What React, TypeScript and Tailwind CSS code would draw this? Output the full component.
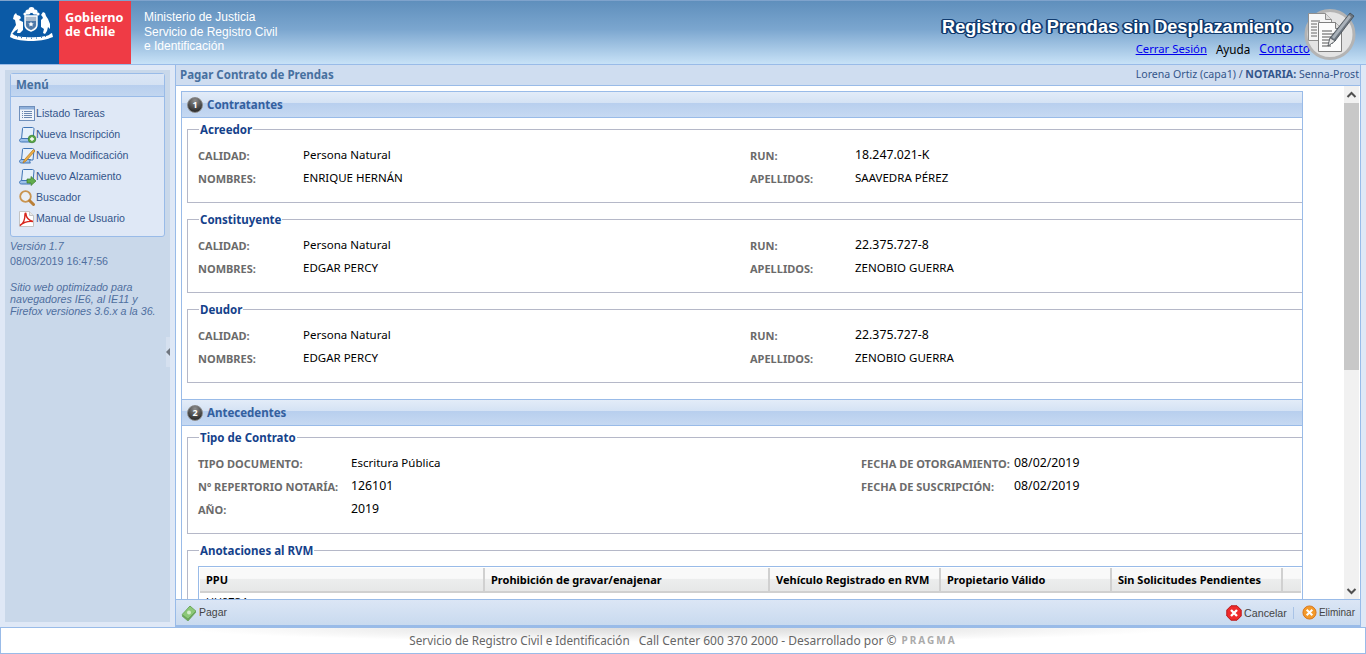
import type { ReactNode } from "react";

const font = "font-['Noto_Sans','DejaVu_Sans',sans-serif]";
const arial = "font-['Liberation_Sans',sans-serif]";

type Field = [string, string];

// escudo, dibujado a mano
const Coat = () => (
  <svg width="46" height="38" viewBox="0 0 46 38">
    <g fill="#fff">
      {/* plumas */}
      <circle cx="20" cy="6" r="2.600" />
      <circle cx="23.500" cy="4" r="3" />
      <circle cx="27" cy="6" r="2.600" />
      <circle cx="17" cy="8" r="1.600" />
      <circle cx="30" cy="8" r="1.600" />
      {/* huemul */}
      <path d="M6 9l2-2 1 2 3 1 1 2-2 2 4 2v8l-3 3h-3l1-4-3 2-3 3-1-1 3-5 2-3-1-5-2-1z" />
      {/* condor */}
      <path d="M33 9l2-3 2 1 1 3 2 3 2 5v5l-2-2-1 4-2 3-2-1 1-4-3-2v-7l2-2-1-2z" />
      {/* cinta */}
      <path d="M3 27c1 0 2 1 3 2 5 3 29 3 35 0 1-1 2-2 3-2l1 4-3 1c-8 4-30 4-38 0l-2-1z" />
    </g>
    <path d="M17 10h12v9c0 3-3 5-6 6-3-1-6-3-6-6z" fill="#a9bacd" stroke="#fff" strokeWidth="1.400" />
    <path d="M18 15h10v4c0 2-3 4-5 5-2-1-5-3-5-5z" fill="#4f79a8" />
    <path d="M23 15.500l.8 1.700 1.900.200-1.400 1.300.400 1.900-1.700-1-1.700 1 .400-1.900-1.400-1.300 1.900-.200z" fill="#fff" />
    <path d="M9 30.500l1 .500M13 31.500l1 .300M18 32h1M23 32.200h1M28 32h1M33 31.400l1-.300M37 30.500l1-.500" stroke="#0b5aa6" />
  </svg>
);

const DocPen = () => (
  <svg width="52" height="52" viewBox="0 0 52 52">
    <circle cx="26" cy="25.500" r="24" fill="#e4e4e4" stroke="#b4b4b4" strokeWidth="3" />
    <path d="M4.500 4.500h17l6 6v21h-23z" fill="#f7f7f7" stroke="#8f8f8f" />
    <path d="M21.500 4.500v6h6" fill="#ddd" stroke="#8f8f8f" />
    <path d="M7 12h9M7 15h6M7 18h6M7 21h6M7 24h6M7 27h6" stroke="#666" />
    <path d="M14.500 13.500h17l6 6v23h-23z" fill="#fcfcfc" stroke="#7f7f7f" />
    <path d="M31.500 13.500v6h6" fill="#ddd" stroke="#7f7f7f" />
    <path d="M18 22h10M18 25h15M18 28h15M18 31h14M18 34h11M18 37h9" stroke="#555" />
    <path d="M46 4l4 3-19 25-7 5 2-8z" fill="#6d7680" stroke="#3a4046" strokeWidth=".700" />
    <path d="M45 6l2 2-17 22-2-2z" fill="#aab2ba" />
    <path d="M24 37l2-8 5 3z" fill="#e8e8e8" stroke="#3a4046" strokeWidth=".500" />
  </svg>
);

const ListIcon = () => (
  <svg width="16" height="15" viewBox="0 0 16 15">
    <rect x=".5" y=".5" width="15" height="14" fill="#f0f5fb" stroke="#6f8fbb" />
    <rect x="1" y="1" width="14" height="2.500" fill="#8fb0da" />
    <path d="M3 5.500h1M5 5.500h8M3 7.500h1M5 7.500h8M3 9.500h1M5 9.500h8M3 11.500h1M5 11.500h8" stroke="#6d89b0" />
  </svg>
);

const Scroll = ({ badge }: { badge: ReactNode }) => (
  <svg width="17" height="16" viewBox="0 0 17 16" className="overflow-visible">
    <path d="M4.500.500h9c1 0 1.500 .7 1.500 1.500l-1 10H2.500l1-10c0-1 0-1.500 1-1.500z" fill="#e6f0fb" stroke="#3f74b5" />
    <path d="M.5 13.500c0-1 1-2 2-2h9c-1 .8-1 3 0 3.500h-9c-1 0-2-.500-2-1.500z" fill="#9cc0ea" stroke="#3f74b5" />
    {badge}
  </svg>
);

const SearchIcon = () => (
  <svg width="16" height="16" viewBox="0 0 16 16" fill="none">
    <circle cx="6.500" cy="6.500" r="5.300" stroke="#c9944f" strokeWidth="1.800" fill="#e9eef5" />
    <path d="M10.700 10.700l3.800 3.800" stroke="#b97f38" strokeWidth="3" strokeLinecap="round" />
  </svg>
);

const PdfIcon = () => (
  <svg width="15" height="16" viewBox="0 0 15 16">
    <path d="M.5.500h10l4 4v11H.5z" fill="#fff" stroke="#c4c4c4" />
    <path d="M10.500.500v4h4" fill="#e8e8e8" stroke="#c4c4c4" />
    <path d="M1 14.500c3-1.500 5-6 5-11.500.2-1 1-1 1 0 0 3 2.500 6.500 7 7.500-4-.500-9 .500-13 4z" fill="none" stroke="#d8261c" strokeWidth="1.400" />
  </svg>
);

const menu: [string, ReactNode][] = [
  ["Listado Tareas", <ListIcon />],
  [
    "Nueva Inscripción",
    <Scroll
      badge={
        <>
          <circle cx="13" cy="12" r="3.800" fill="#5fa84b" stroke="#2f7a2b" strokeWidth=".700" />
          <path d="M11 12h4M13 10v4" stroke="#fff" strokeWidth="1.300" />
        </>
      }
    />,
  ],
  [
    "Nueva Modificación",
    <Scroll badge={<path d="M16 3L7 13l-3 2 1.500-3.500L14.500 1.500z" fill="#eeb04a" stroke="#b77a1e" strokeWidth=".800" />} />,
  ],
  [
    "Nuevo Alzamiento",
    <Scroll badge={<path d="M8 10h4V7.500l5 4.500-5 4.500V14H8z" fill="#62ad4e" stroke="#3d7d2d" strokeWidth=".700" />} />,
  ],
  ["Buscador", <SearchIcon />],
  ["Manual de Usuario", <PdfIcon />],
];

const SectionHead = ({ n, title }: { n: number; title: string }) => (
  <div className="h-[27px] border-y border-[#99bbe8] bg-[linear-gradient(#e3ecf8_0%,#d4e2f4_45%,#b8cfee_46%,#c6d9f2_100%)] flex items-center pl-[5px] gap-[4px]">
    <span className="w-[16px] h-[16px] rounded-full bg-[radial-gradient(circle_at_50%_20%,#8f8f8f,#333_75%)] border border-[#888] flex items-center justify-center text-white text-[9px] font-bold leading-none">
      {n}
    </span>
    <span className="text-[11.500px] font-bold text-[#33609f]">{title}</span>
  </div>
);

const Group = ({ legend, children, className }: { legend: string; children: ReactNode; className: string }) => (
  <fieldset className={`border border-[#b5b8c8] border-r-0 ml-[5px] pl-[10px] ${className}`}>
    <legend className="ml-[1px] px-[1px] text-[11.500px] leading-[15px] font-bold text-[#15428b]">{legend}</legend>
    {children}
  </fieldset>
);

const Label = ({ children }: { children: ReactNode }) => (
  <span className="text-[11px] font-bold text-[#6b6b6b] leading-[15px]">{children}</span>
);

// los numeros van un poco mas anchos que el texto
const Value = ({ children }: { children: string }) => (
  <span className={`${/^\d/.test(children) ? "text-[12.300px]" : "text-[11.500px]"} text-black leading-[15px]`}>
    {children}
  </span>
);

const Party = ({ legend, left, right }: { legend: string; left: Field[]; right: Field[] }) => (
  <Group legend={legend} className="h-[81px] mb-[9px]">
    <div className="flex pt-[10px]">
      {[left, right].map((col, i) => (
        <div key={i} className="w-[552px] flex flex-col gap-[8px]">
          {col.map(([l, v]) => (
            <div key={l} className="flex h-[15px] items-center">
              <span className="w-[105px] pt-[1px] flex"><Label>{l}</Label></span>
              <Value>{v}</Value>
            </div>
          ))}
        </div>
      ))}
    </div>
  </Group>
);

const columns: [string, string][] = [
  ["PPU", "w-[285px]"],
  ["Prohibición de gravar/enajenar", "w-[285px]"],
  ["Vehículo Registrado en RVM", "w-[171px]"],
  ["Propietario Válido", "w-[171px]"],
  ["Sin Solicitudes Pendientes", "w-[171px]"],
  ["", "flex-1"],
];

const Contract = () => (
  <Group legend="Tipo de Contrato" className="h-[104px] mb-[9px]">
    <div className="flex pt-[10px]">
      <div className="w-[663px] flex flex-col gap-[8px]">
        {[
          ["TIPO DOCUMENTO:", "Escritura Pública"],
          ["Nº REPERTORIO NOTARÍA:", "126101"],
          ["AÑO:", "2019"],
        ].map(([l, v]) => (
          <div key={l} className="flex h-[15px] items-center">
            <span className="w-[153px] pt-[2px] flex whitespace-nowrap"><Label>{l}</Label></span>
            <Value>{v}</Value>
          </div>
        ))}
      </div>
      <div className="flex flex-col gap-[8px]">
        {[
          ["FECHA DE OTORGAMIENTO:", "08/02/2019"],
          ["FECHA DE SUSCRIPCIÓN:", "08/02/2019"],
        ].map(([l, v]) => (
          <div key={l} className="flex h-[15px] items-center">
            <span className="w-[153px] pt-[2px] flex whitespace-nowrap"><Label>{l}</Label></span>
            <Value>{v}</Value>
          </div>
        ))}
      </div>
    </div>
  </Group>
);

const Annotations = () => (
  <Group legend="Anotaciones al RVM" className="h-[100px]">
    <div className="mt-[8px] border border-[#99bbe8] border-r-0 p-px pb-0">
      <div className="flex h-[25px] border-b-2 border-[#d0d0d0] bg-[linear-gradient(#f9f9f9_0%,#f9f9f9_45%,#eceded_50%,#e6e7e7_100%)]">
        {columns.map(([c, w]) => (
          <div key={c} className={`${w} border-r-2 border-[#d0d0d0] last:border-r-0 pl-[6px] text-[11px] leading-[24px] font-bold text-black whitespace-nowrap`}>
            {c}
          </div>
        ))}
      </div>
      <div className="pl-[6px] pt-px text-[11px] leading-[15px]">UU9734</div>
    </div>
  </Group>
);

export default function App() {
  return (
    <div className={`${font} w-[1366px] h-[654px] overflow-hidden flex flex-col bg-[#dfe8f6]`}>
      <header className="relative h-[65px] shrink-0 border-y border-[#99bbe8] border-t-[#7fa3cc] flex bg-[linear-gradient(#5f8fbc_0%,#7ba6cf_45%,#c8e2f7_100%)]">
        <div className="w-[59px] bg-[#0b5aa6] pl-[8px] pt-[5px]"><Coat /></div>
        <div className="w-[72px] bg-[#ef3b45] pl-[6px] pt-[9px] text-white text-[12.700px] leading-[14px] font-bold">
          Gobierno<br />de Chile
        </div>
        <div className={`${arial} pl-[13px] pt-[9px] text-[12px] leading-[14.500px] text-white`}>
          <div>Ministerio de Justicia</div>
          <div>Servicio de Registro Civil</div>
          <div>e Identificación</div>
        </div>
        <div className="flex-1 flex flex-col items-end pr-[74px] pt-[15px]">
          <div className={`${arial} text-[18.100px] leading-[22px] font-bold text-white [text-shadow:-1px_-1px_0_#103a6e,1px_-1px_0_#103a6e,-1px_1px_0_#103a6e,1px_1px_0_#103a6e,2px_0_0_#103a6e,-2px_0_0_#103a6e]`}>
            Registro de Prendas sin Desplazamiento
          </div>
          <div className="flex gap-[9px] text-[12px] leading-[16px] mt-[3px] -mr-[18px] text-black">
            <a className="underline text-[#0000ee] text-[11.300px]">Cerrar Sesión</a>
            <span className="text-[11.700px]">Ayuda</span>
            <a className="underline text-[#0000ee]">Contacto</a>
          </div>
        </div>
        <div className="absolute left-[1304px] top-[8px]">
          <DocPen />
        </div>
      </header>

      <div className="flex-1 min-h-0 flex">
        <aside className="w-[175px] shrink-0 p-[5px] relative">
          <div className="h-full bg-[#c9d8ea] px-[5px] pt-[3px]">
            <div className="h-[164px] border border-[#99bbe8] rounded-[3px] bg-[#dfe8f6]">
              <div className="h-[23px] border-b border-[#99bbe8] bg-[linear-gradient(#dbe6f5_0%,#d4e1f3_50%,#b8cfee_51%,#c2d6f0_100%)] pl-[5px] text-[11.500px] leading-[22px] font-bold text-[#47709f]">
                Menú
              </div>
              <div className={`${arial} pl-[8px] pt-[6px] flex flex-col`}>
                {menu.map(([label, icon]) => (
                  <div key={label} className="h-[21px] flex items-center text-[10.600px] text-[#33558a]">
                    <span className="w-[17px] flex">{icon}</span>
                    {label}
                  </div>
                ))}
              </div>
            </div>
            <div className={`${arial} pt-[2px] text-[10.700px] text-[#4f6f9f]`}>
              <div className="italic leading-[15px]">Versión 1.7</div>
              <div className="leading-[15px]">08/03/2019 16:47:56</div>
              <div className="italic leading-[12px] mt-[12px]">
                Sitio web optimizado para<br />navegadores IE6, al IE11 y<br />Firefox versiones 3.6.x a la 36.
              </div>
            </div>
          </div>
          <div className="absolute right-[5px] top-[272px] w-[4px] h-[30px] bg-[#d5e0ef] flex items-center justify-center">
            <svg width="4" height="8" viewBox="0 0 4 8"><path d="M4 0v8L0 4z" fill="#6f7680" /></svg>
          </div>
        </aside>

        <main className="flex-1 min-w-0 mr-[5px] flex flex-col border-x border-b-2 border-[#99bbe8]">
          <div className="h-[21px] shrink-0 bg-[#cfddf0] border-b border-[#99bbe8] flex justify-between items-center pl-[4px] pr-[1px]">
            <span className="text-[11.500px] font-bold text-[#47709f]">Pagar Contrato de Prendas</span>
            <span className="text-[10.600px] text-[#33558a]">
              Lorena Ortiz (capa1) / <b>NOTARIA:</b> Senna-Prost
            </span>
          </div>
          <div className="flex-1 min-h-0 bg-white flex relative overflow-hidden">
            <div className="w-[1122px] shrink-0 ml-[5px] mt-[5px] border-x border-[#99bbe8] h-[700px]">
              <SectionHead n={1} title="Contratantes" />
              <div className="pt-[4px]">
                <Party
                  legend="Acreedor"
                  left={[["CALIDAD:", "Persona Natural"], ["NOMBRES:", "ENRIQUE HERNÁN"]]}
                  right={[["RUN:", "18.247.021-K"], ["APELLIDOS:", "SAAVEDRA PÉREZ"]]}
                />
                <Party
                  legend="Constituyente"
                  left={[["CALIDAD:", "Persona Natural"], ["NOMBRES:", "EDGAR PERCY"]]}
                  right={[["RUN:", "22.375.727-8"], ["APELLIDOS:", "ZENOBIO GUERRA"]]}
                />
                <Party
                  legend="Deudor"
                  left={[["CALIDAD:", "Persona Natural"], ["NOMBRES:", "EDGAR PERCY"]]}
                  right={[["RUN:", "22.375.727-8"], ["APELLIDOS:", "ZENOBIO GUERRA"]]}
                />
              </div>
              <div className="mt-[16px]">
                <SectionHead n={2} title="Antecedentes" />
              </div>
              <div className="pt-[4px]">
                <Contract />
                <Annotations />
              </div>
            </div>
            <div className="absolute right-px top-0 bottom-0 w-[15px] bg-[#f1f1f1] flex flex-col items-center">
              <svg width="15" height="17" viewBox="0 0 15 17"><path d="M3.500 11l4-4 4 4" fill="none" stroke="#505050" strokeWidth="2" /></svg>
              <div className="w-full h-[267px] bg-[#c8c8c8]" />
              <div className="flex-1" />
              <svg width="15" height="17" viewBox="0 0 15 17"><path d="M3.500 7l4 4 4-4" fill="none" stroke="#505050" strokeWidth="2" /></svg>
            </div>
          </div>
          <div className={`${arial} h-[26px] shrink-0 border-t border-[#99bbe8] bg-[linear-gradient(#dbe6f5,#c9daef)] flex items-center justify-between pl-[5px] pr-[5px] pt-px text-[10.500px] text-[#444]`}>
            <div className="flex items-center gap-[2px]">
              <svg width="16" height="16" viewBox="0 0 16 16">
                <path d="M1 11l8-10 6 6-8 9z" fill="#6fa85c" stroke="#5c9a4c" strokeWidth=".600" />
                <path d="M1 9.500L9 1l6 5-8 8z" fill="#8cc878" stroke="#5c9a4c" strokeWidth=".600" />
                <circle cx="8" cy="7.500" r="2" fill="#d3ecc8" />
              </svg>
              Pagar
            </div>
            <div className="flex items-center">
              <svg width="16" height="16" viewBox="0 0 16 16">
                <path d="M5 .8h6L15.200 5v6L11 15.200H5L.8 11V5z" fill="#ef2b2b" stroke="#b81818" />
                <path d="M5 5l6 6M11 5l-6 6" stroke="#fff" strokeWidth="2.400" />
              </svg>
              <span className="ml-[2px] text-[10.700px]">Cancelar</span>
              <span className="w-px h-[12px] bg-[#a9c3e6] ml-[6px] mr-[8px]" />
              <svg width="15" height="15" viewBox="0 0 16 16">
                <circle cx="8" cy="8" r="7" fill="#f39a2b" stroke="#d9741a" />
                <path d="M5 5l6 6M11 5l-6 6" stroke="#fff" strokeWidth="2.200" />
              </svg>
              <span className="ml-[2px] text-[10px]">Eliminar</span>
            </div>
          </div>
        </main>
      </div>

      <footer className="h-[27px] shrink-0 border border-[#99bbe8] bg-[radial-gradient(ellipse_500px_14px_at_50%_0%,#d8d8d8,#ffffff)] flex items-center justify-center gap-[5px] text-[#666]">
        <span className="text-[11.700px]">Servicio de Registro Civil e Identificación</span>
        <span className="ml-[4px] text-[12px]">Call Center 600 370 2000 - Desarrollado por ©</span>
        <span className="text-[10px] font-bold tracking-[2px] text-[#aaa]">PRAGMA</span>
      </footer>
    </div>
  );
}
